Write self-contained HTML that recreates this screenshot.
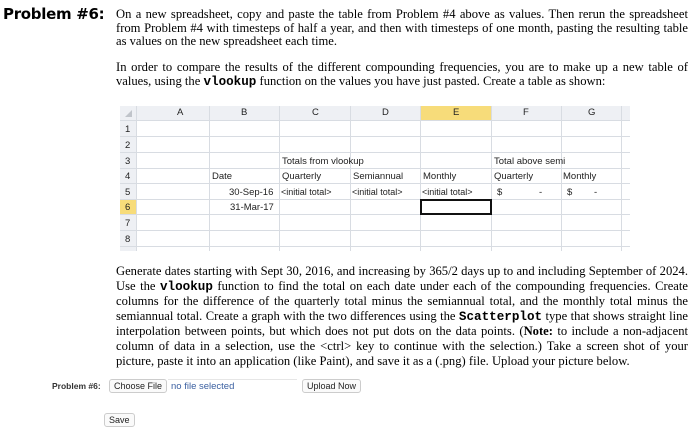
<!DOCTYPE html>
<html><head><meta charset="utf-8"><style>
body{margin:0;width:700px;height:428px;background:#fff;position:relative;overflow:hidden;font-family:"Liberation Serif",serif;}
.h{position:absolute;left:3px;top:5px;font:bold 15px "DejaVu Sans",sans-serif;letter-spacing:-0.3px}
.p{position:absolute;left:116px;width:572px;font-size:12.6px;line-height:13.5px;color:#000}
.l{text-align:justify;text-align-last:justify;white-space:nowrap;overflow:visible}
.l.e{text-align-last:left}
code{font-family:"Liberation Mono",monospace;font-weight:bold;font-size:12.6px}
.ss{position:absolute;left:120px;top:106px;width:510px;height:145px;font:9.5px "Liberation Sans",sans-serif;color:#222;overflow:hidden}
.c{position:absolute;white-space:nowrap}
.btn{position:absolute;border:1px solid #ccc;border-radius:3px;background:#fafafa;font:9px "Liberation Sans",sans-serif;color:#222;padding:1px 4px}
</style></head><body>
<div class="h">Problem #6:</div>
<div class="p" style="top:8px">
<div class="l">On a new spreadsheet, copy and paste the table from Problem #4 above as values. Then rerun the spreadsheet</div>
<div class="l">from Problem #4 with timesteps of half a year, and then with timesteps of one month, pasting the resulting table</div>
<div class="l e">as values on the new spreadsheet each time.</div>
</div>
<div class="p" style="top:61px">
<div class="l">In order to compare the results of the different compounding frequencies, you are to make up a new table of</div>
<div class="l e">values, using the <code>vlookup</code> function on the values you have just pasted. Create a table as shown:</div>
</div>
<div class="ss">
<svg width="510" height="145" style="position:absolute;left:0;top:0">
<rect x="0" y="0" width="510" height="14" fill="#eef0f4"/>
<rect x="0" y="0" width="16" height="145" fill="#eef0f4"/>
<rect x="300" y="0" width="71" height="14" fill="#f7dc7a"/>
<rect x="0" y="93" width="16" height="15.5" fill="#f7dc7a"/>
<g stroke="#d8dce2" stroke-width="1">
<line x1="0" y1="14.5" x2="510" y2="14.5"/>
<line x1="0" y1="30.5" x2="510" y2="30.5"/><line x1="0" y1="46.5" x2="510" y2="46.5"/>
<line x1="0" y1="62.5" x2="510" y2="62.5"/><line x1="0" y1="77.5" x2="510" y2="77.5"/>
<line x1="0" y1="93.5" x2="510" y2="93.5"/><line x1="0" y1="108.5" x2="510" y2="108.5"/>
<line x1="0" y1="124.5" x2="510" y2="124.5"/><line x1="0" y1="140.5" x2="510" y2="140.5"/>
<line x1="16.5" y1="0" x2="16.5" y2="145"/><line x1="89.5" y1="0" x2="89.5" y2="145"/>
<line x1="159.5" y1="0" x2="159.5" y2="145"/><line x1="230.5" y1="0" x2="230.5" y2="145"/>
<line x1="300.5" y1="0" x2="300.5" y2="145"/><line x1="371.5" y1="0" x2="371.5" y2="145"/>
<line x1="441.5" y1="0" x2="441.5" y2="145"/><line x1="501.5" y1="0" x2="501.5" y2="145"/>
</g>
<rect x="301" y="94" width="70" height="14" fill="none" stroke="#111" stroke-width="2"/>
<polygon points="5,11 12,11 12,4" fill="#c0c4ca"/>
</svg>
<div class="c" style="left:57px;top:1px">A</div><div class="c" style="left:121px;top:1px">B</div>
<div class="c" style="left:192px;top:1px">C</div><div class="c" style="left:262px;top:1px">D</div>
<div class="c" style="left:333px;top:1px">E</div><div class="c" style="left:403px;top:1px">F</div>
<div class="c" style="left:468px;top:1px">G</div>
<div class="c" style="left:5px;top:18px">1</div><div class="c" style="left:5px;top:34px">2</div>
<div class="c" style="left:5px;top:50px">3</div><div class="c" style="left:5px;top:65px">4</div>
<div class="c" style="left:5px;top:81px">5</div><div class="c" style="left:5px;top:96px">6</div>
<div class="c" style="left:5px;top:112px">7</div><div class="c" style="left:5px;top:128px">8</div>
<div class="c" style="left:162px;top:50px">Totals from vlookup</div>
<div class="c" style="left:374px;top:50px">Total above semi</div>
<div class="c" style="left:92px;top:65px">Date</div>
<div class="c" style="left:162px;top:65px">Quarterly</div>
<div class="c" style="left:233px;top:65px">Semiannual</div>
<div class="c" style="left:303px;top:65px">Monthly</div>
<div class="c" style="left:374px;top:65px">Quarterly</div>
<div class="c" style="left:443px;top:65px">Monthly</div>
<div class="c" style="left:109px;top:81px">30-Sep-16</div>
<div class="c" style="left:161px;top:81px;font-size:9px">&lt;initial total&gt;</div>
<div class="c" style="left:232px;top:81px;font-size:9px">&lt;initial total&gt;</div>
<div class="c" style="left:302px;top:81px;font-size:9px">&lt;initial total&gt;</div>
<div class="c" style="left:377px;top:81px">$</div><div class="c" style="left:419px;top:81px">-</div>
<div class="c" style="left:447px;top:81px">$</div><div class="c" style="left:474px;top:81px">-</div>
<div class="c" style="left:110px;top:96px">31-Mar-17</div>
</div>
<div class="p" style="top:264px;line-height:14.6px">
<div class="l">Generate dates starting with Sept 30, 2016, and increasing by 365/2 days up to and including September of 2024.</div>
<div class="l">Use the <code>vlookup</code> function to find the total on each date under each of the compounding frequencies. Create</div>
<div class="l">columns for the difference of the quarterly total minus the semiannual total, and the monthly total minus the</div>
<div class="l">semiannual total. Create a graph with the two differences using the <code>Scatterplot</code> type that shows straight line</div>
<div class="l">interpolation between points, but which does not put dots on the data points. (<b>Note:</b> to include a non-adjacent</div>
<div class="l">column of data in a selection, use the &lt;ctrl&gt; key to continue with the selection.) Take a screen shot of your</div>
<div class="l e">picture, paste it into an application (like Paint), and save it as a (.png) file. Upload your picture below.</div>
</div>
<div class="c" style="position:absolute;left:52px;top:381px;font:bold 8.5px 'Liberation Sans',sans-serif;color:#333">Problem #6:</div>
<div class="btn" style="left:109px;top:379px">Choose File</div>
<div style="position:absolute;left:168px;top:379px;width:126px;height:13px;border-top:1px solid #e6e6e6;font:9.5px 'Liberation Sans',sans-serif;color:#3a5fa0;padding-left:3px;line-height:14px">no file selected</div>
<div class="btn" style="left:302px;top:379px">Upload Now</div>
<div class="btn" style="left:104px;top:413px">Save</div>
</body></html>
